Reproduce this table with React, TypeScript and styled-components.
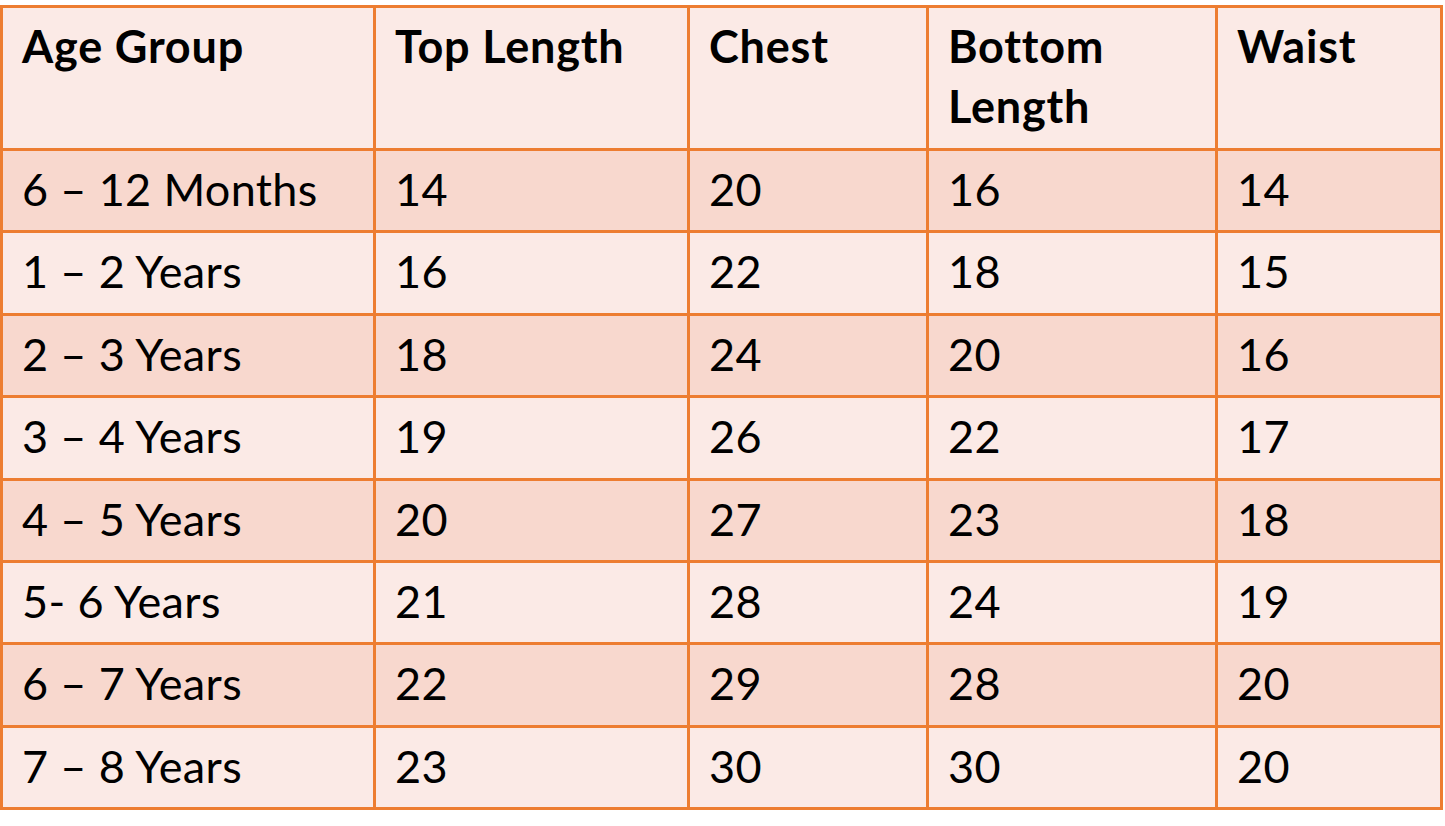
import React from "react";
import styled, { createGlobalStyle } from "styled-components";

const Global = createGlobalStyle`
  html, body { margin: 0; padding: 0; background: #ffffff; }
  body { font-family: Lato, "Open Sans", sans-serif; }
`;

const Page = styled.div`
  padding-top: 5px;
  width: 1445px;
  height: 826px;
  box-sizing: border-box;
  background: #ffffff;
`;

const Grid = styled.div`
  display: grid;
  width: 1443px;
  box-sizing: border-box;
  grid-template-columns: 370px 311px 236px 286px 222px;
  grid-template-rows: 140px repeat(8, 79.4px);
  gap: 3px;
  padding: 3px;
  background: #ed7d31;
`;

const Cell = styled.div<{ $band?: boolean; $head?: boolean }>`
  background: ${(p) => (p.$band ? "#f8d8ce" : "#fbeae6")};
  padding: 8px 8px 0 19px;
  font-family: Lato, "Open Sans", sans-serif;
  font-size: 45px;
  line-height: 60px;
  font-weight: ${(p) => (p.$head ? 700 : 400)};
  letter-spacing: ${(p) => (p.$head ? "0.8px" : "0.35px")};
  color: #000000;
  overflow: hidden;
`;

const headers = ["Age Group", "Top Length", "Chest", "Bottom Length", "Waist"];

const rows: string[][] = [
  ["6 – 12 Months", "14", "20", "16", "14"],
  ["1 – 2 Years", "16", "22", "18", "15"],
  ["2 – 3 Years", "18", "24", "20", "16"],
  ["3 – 4 Years", "19", "26", "22", "17"],
  ["4 – 5 Years", "20", "27", "23", "18"],
  ["5- 6 Years", "21", "28", "24", "19"],
  ["6 – 7 Years", "22", "29", "28", "20"],
  ["7 – 8 Years", "23", "30", "30", "20"],
];

export default function App() {
  return (
    <>
      <Global />
      <Page>
        <Grid>
          {headers.map((h) => (
            <Cell key={h} $head>
              {h}
            </Cell>
          ))}
          {rows.map((r, i) =>
            r.map((c, j) => (
              <Cell key={`${i}-${j}`} $band={i % 2 === 0}>
                {c}
              </Cell>
            ))
          )}
        </Grid>
      </Page>
    </>
  );
}
